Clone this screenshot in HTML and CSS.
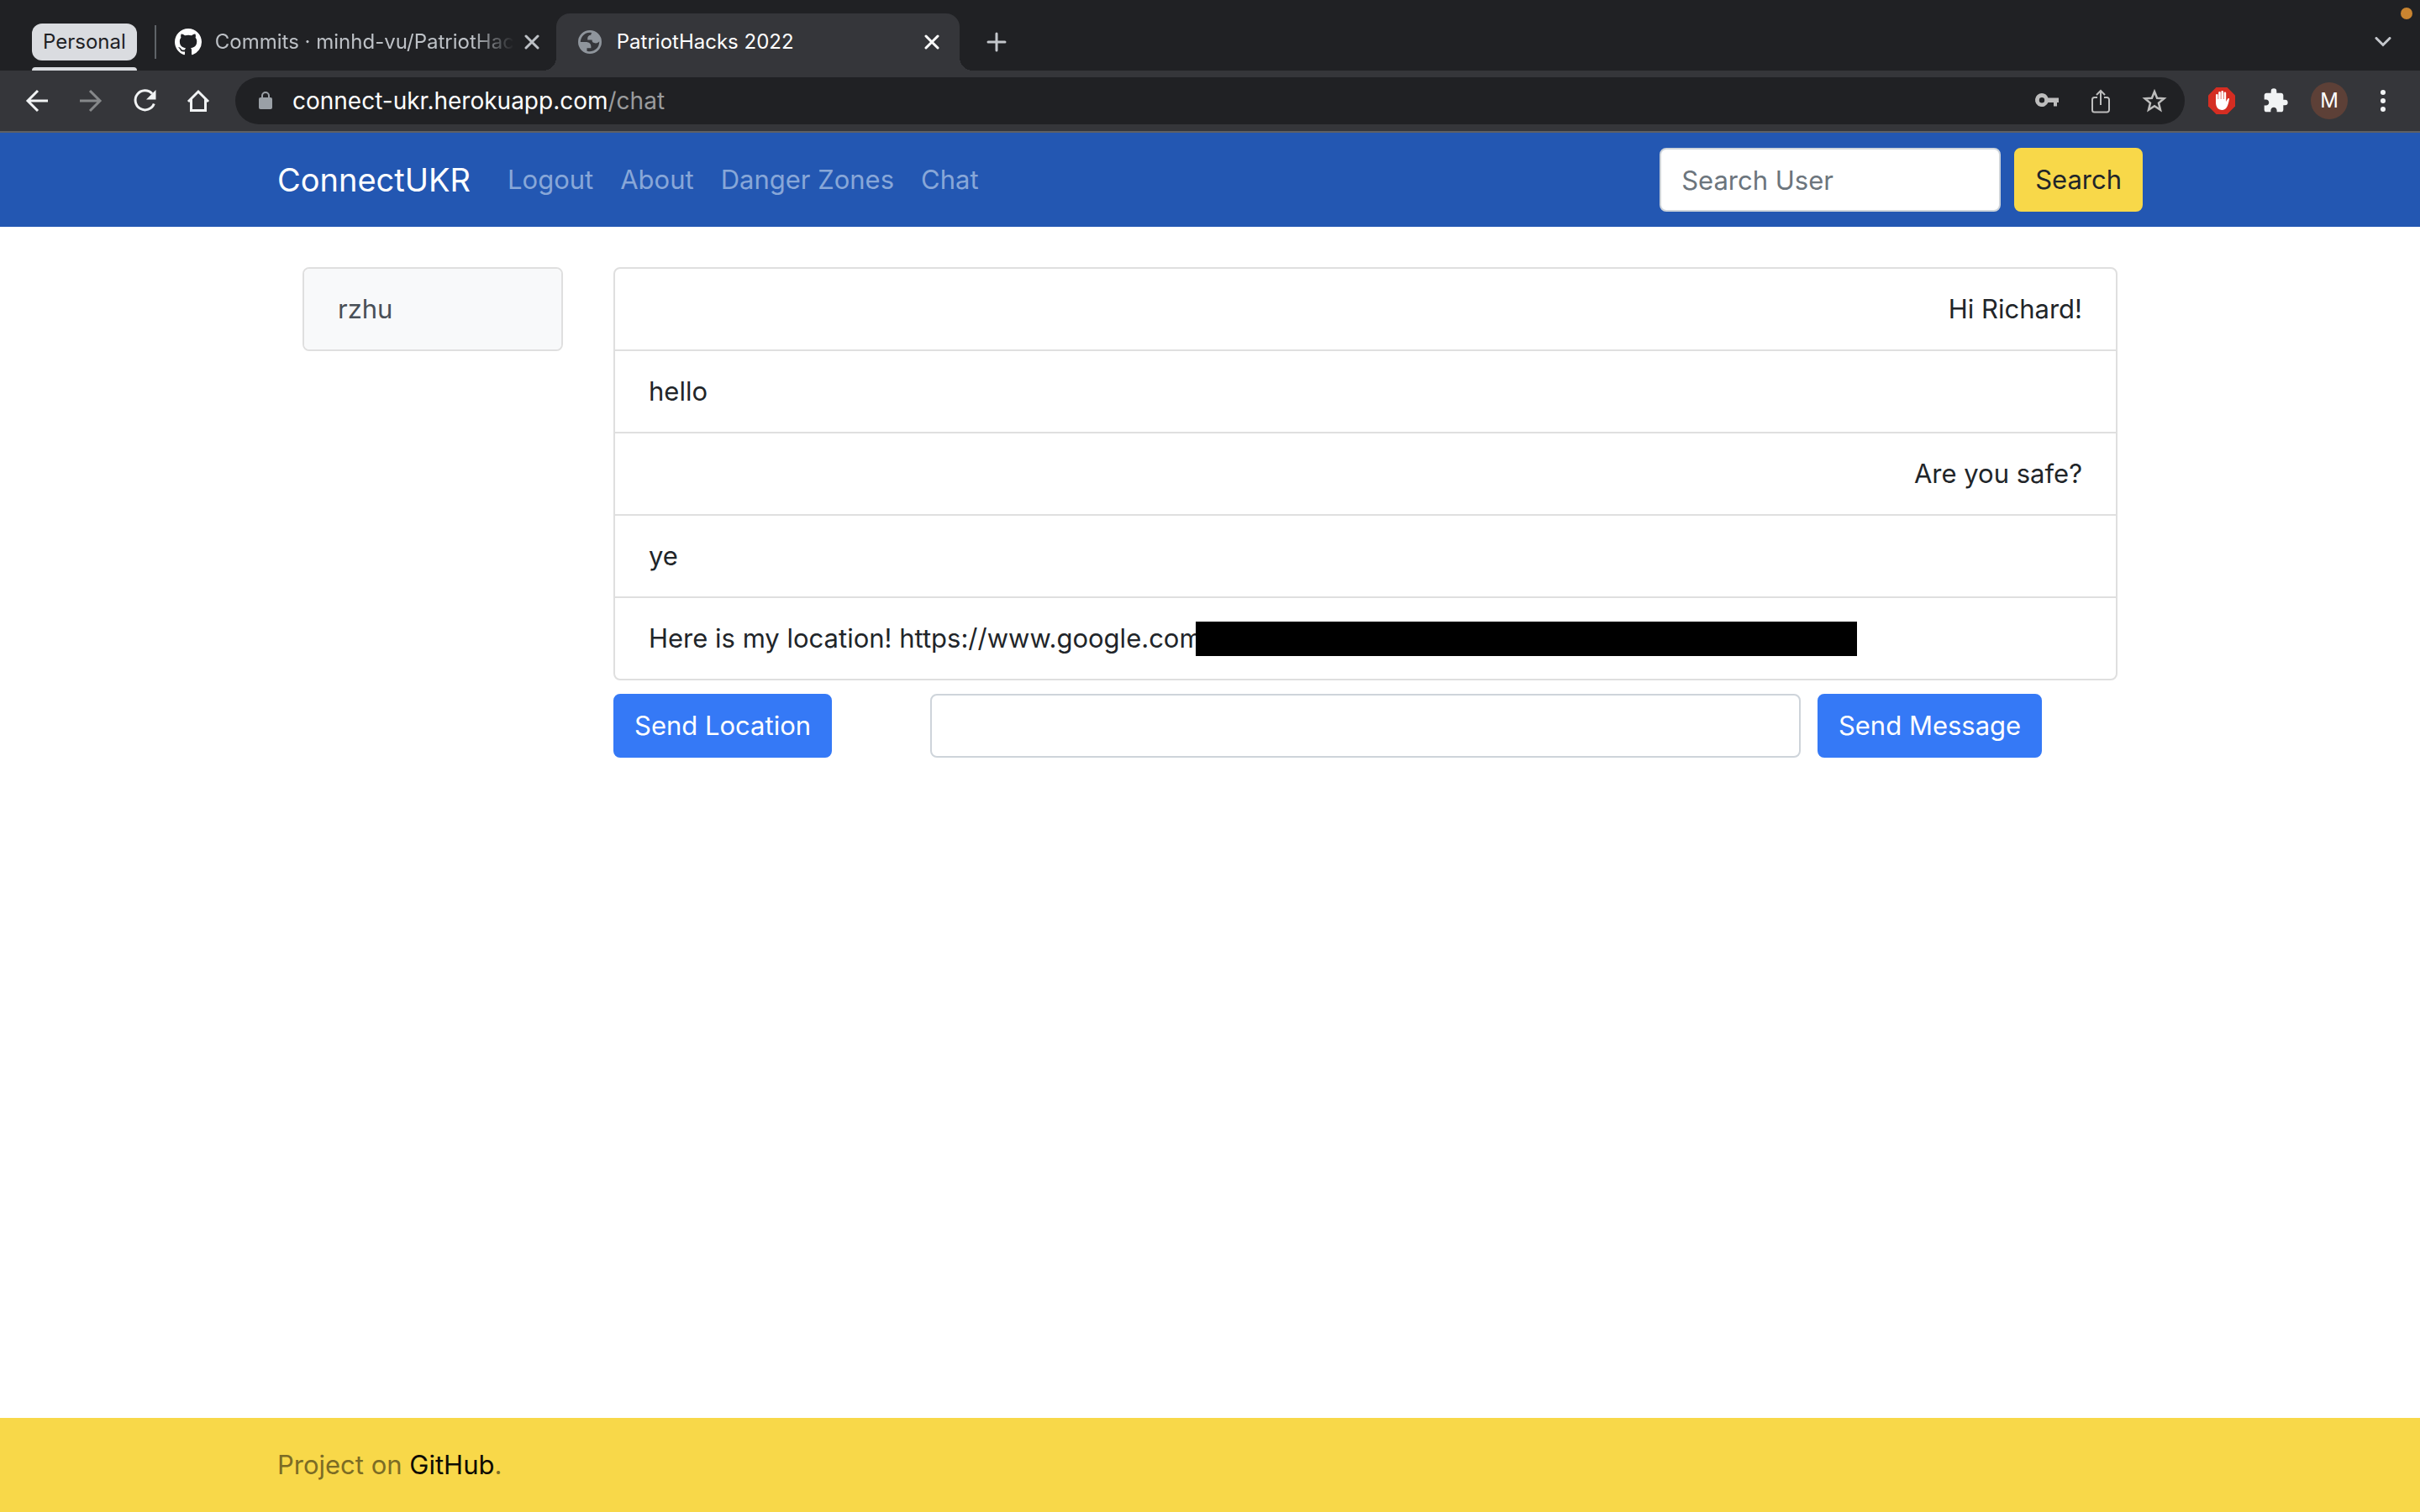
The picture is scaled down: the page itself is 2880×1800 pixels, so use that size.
FILE: index.html
```html
<!DOCTYPE html>
<html lang="en">
<head>
    <meta charset="UTF-8">
    <meta name="viewport" content="width=device-width, initial-scale=1.0">
    <title>PatriotHacks 2022</title>
    <link rel="stylesheet" href="styles.css">
</head>
<body>
    <!-- Browser window -->
    <div class="browser">
        <div class="tab-strip">
            <button class="tab-group" type="button">Personal</button>
            <span class="tab-separator"></span>
            <div class="tab">
                <svg class="tab-icon tab-icon-github" viewBox="0 0 16 16"><path fill="#fff" d="M8 0C3.58 0 0 3.58 0 8c0 3.54 2.29 6.53 5.47 7.59.4.07.55-.17.55-.38 0-.19-.01-.82-.01-1.49-2.01.37-2.53-.49-2.69-.94-.09-.23-.48-.94-.82-1.13-.28-.15-.68-.52-.01-.53.63-.01 1.08.58 1.23.82.72 1.21 1.87.87 2.33.66.07-.52.28-.87.51-1.07-1.78-.2-3.64-.89-3.64-3.95 0-.87.31-1.59.82-2.15-.08-.2-.36-1.02.08-2.12 0 0 .67-.21 2.2.82.64-.18 1.32-.27 2-.27s1.36.09 2 .27c1.53-1.04 2.2-.82 2.2-.82.44 1.1.16 1.92.08 2.12.51.56.82 1.27.82 2.15 0 3.07-1.87 3.75-3.65 3.95.29.25.54.73.54 1.48 0 1.07-.01 1.93-.01 2.2 0 .21.15.46.55.38A8.01 8.01 0 0 0 16 8c0-4.42-3.58-8-8-8z"/></svg>
                <span class="tab-title tab-title-fade">Commits · minhd-vu/PatriotHac</span>
                <button class="tab-close" type="button" aria-label="Close tab">
                    <svg viewBox="0 0 18 18"><path d="M2 2l14 14M16 2L2 16"/></svg>
                </button>
            </div>
            <div class="tab tab-active">
                <svg class="tab-icon tab-icon-globe" viewBox="2 2 20 20"><path fill="#8f959c" fill-rule="evenodd" d="M12 2a10 10 0 1 0 0 20 10 10 0 0 0 0-20zM4 12h4.400c3.407.022 4.922 1.730 4.543 5.127H9.488v2.470a8.004 8.004 0 0 0 10.498-8.083C19.327 12.504 18.332 13 17 13c-2.137 0-3.206-.916-3.206-2.750h-3.748c-.274-2.728.683-4.092 2.870-4.092 0-.975.327-1.597.811-1.970A8.004 8.004 0 0 0 4 12z"/></svg>
                <span class="tab-title">PatriotHacks 2022</span>
                <button class="tab-close" type="button" aria-label="Close tab">
                    <svg viewBox="0 0 18 18"><path d="M2 2l14 14M16 2L2 16"/></svg>
                </button>
            </div>
            <button class="new-tab" type="button" aria-label="New tab">
                <svg viewBox="0 0 24 24"><path d="M12 2v20M2 12h20"/></svg>
            </button>
            <button class="tab-search" type="button" aria-label="Search tabs">
                <svg viewBox="0 0 20 12"><path d="M2 1.500l8 8 8-8"/></svg>
            </button>
            <span class="recording-dot"></span>
        </div>

        <div class="toolbar">
            <div class="toolbar-nav">
                <button type="button" aria-label="Back">
                    <svg viewBox="0 0 32 32"><path fill="none" stroke="#f1f3f4" stroke-width="3" d="M29 16H5M17 4L5 16l12 12"/></svg>
                </button>
                <button type="button" aria-label="Forward">
                    <svg viewBox="0 0 32 32"><path fill="none" stroke="#86888a" stroke-width="3" d="M3 16h24M15 4l12 12-12 12"/></svg>
                </button>
                <button type="button" aria-label="Reload">
                    <svg viewBox="0 0 32 32"><path fill="none" stroke="#f1f3f4" stroke-width="3" d="M25 7.500A11.500 11.500 0 1 0 27.300 19.500"/><path fill="#f1f3f4" d="M29.500 3v11.500H18z"/></svg>
                </button>
                <button type="button" aria-label="Home">
                    <svg viewBox="0 0 32 32"><path fill="none" stroke="#f1f3f4" stroke-width="3" d="M4 17L16 5l12 12M7.500 14v13.500h17V14"/></svg>
                </button>
            </div>
            <div class="address-bar">
                <svg class="lock" viewBox="0 0 16 22"><rect y="7" width="16" height="14" rx="2" fill="#9aa0a6"/><path fill="none" stroke="#9aa0a6" stroke-width="2" d="M4 8V5a4 4 0 0 1 8 0v3"/></svg>
                <span class="url">connect-ukr.herokuapp.com<span class="url-path">/chat</span></span>
                <button type="button" aria-label="Passwords">
                    <svg viewBox="0 0 32 32"><path fill="#bdbdbd" fill-rule="evenodd" d="M10 7a8 8 0 1 0 7.400 11H24v4.500h4V18h2v-5.500H17.400A8 8 0 0 0 10 7zm0 5a3.200 3.200 0 1 1 0 6.400 3.200 3.200 0 0 1 0-6.400z"/></svg>
                </button>
                <button type="button" aria-label="Share">
                    <svg viewBox="0 0 32 32"><path fill="none" stroke="#bdbdbd" stroke-width="2" d="M12 12H8.500a2.500 2.500 0 0 0-2.500 2.500V27a2.500 2.500 0 0 0 2.500 2.500h15A2.500 2.500 0 0 0 26 27V14.500a2.500 2.500 0 0 0-2.500-2.500H20M16 21V4M11 9l5-5 5 5"/></svg>
                </button>
                <button type="button" aria-label="Bookmark">
                    <svg viewBox="0 0 32 32"><path fill="none" stroke="#bdbdbd" stroke-width="2.500" d="M16 5l3.100 7.700 8.300.6-6.400 5.300 2 8.100-7-4.400-7 4.400 2-8.100-6.400-5.300 8.300-.6z"/></svg>
                </button>
            </div>
            <div class="toolbar-extras">
                <button type="button" aria-label="Ad blocker">
                    <svg viewBox="0 0 32 32"><path fill="#d52d22" d="M9.500 0h13L32 9.500v13L22.500 32h-13L0 22.500v-13z"/><path fill="#fff" d="M9 18V9.300a1.300 1.300 0 0 1 2.600 0V14h.6V6.300a1.300 1.300 0 0 1 2.600 0V14h.6V5.300a1.300 1.300 0 0 1 2.600 0V14h.6V6.800a1.300 1.300 0 0 1 2.600 0V17l1.800-3.300c.5-.9 1.700-.8 2.100-.2-.8 4.500-2.300 13.500-8.300 13.500C11.500 27 9 23 9 18z"/></svg>
                </button>
                <button type="button" aria-label="Extensions">
                    <svg viewBox="0 0 24 24"><path fill="#f1f3f4" d="M20.500 11H19V7c0-1.100-.9-2-2-2h-4V3.500a2.500 2.500 0 0 0-5 0V5H4c-1.100 0-1.990.9-1.990 2v3.800H3.500c1.490 0 2.700 1.210 2.700 2.700s-1.210 2.700-2.700 2.700H2V20c0 1.100.9 2 2 2h3.800v-1.500c0-1.490 1.210-2.700 2.700-2.700s2.700 1.210 2.700 2.700V22H17c1.100 0 2-.9 2-2v-4h1.500a2.500 2.500 0 0 0 0-5z"/></svg>
                </button>
                <button class="profile" type="button">M</button>
                <button type="button" aria-label="Menu">
                    <svg viewBox="0 0 32 32" fill="#f1f3f4"><circle cx="16" cy="6" r="3"/><circle cx="16" cy="16" r="3"/><circle cx="16" cy="26" r="3"/></svg>
                </button>
            </div>
        </div>
    </div>

    <nav class="navbar">
        <div class="container navbar-inner">
            <a class="navbar-brand" href="#">ConnectUKR</a>
            <div class="navbar-nav">
                <a href="#">Logout</a>
                <a href="#">About</a>
                <a href="#">Danger Zones</a>
                <a href="#">Chat</a>
            </div>
            <form class="search-form">
                <input class="form-control" type="search" placeholder="Search User" aria-label="Search User">
                <button class="btn btn-warning" type="submit">Search</button>
            </form>
        </div>
    </nav>

    <main class="container chat">
        <div class="chat-users">
            <div class="list-group">
                <a class="list-item list-item-user" href="#">rzhu</a>
            </div>
        </div>
        <div class="chat-main">
            <ul class="list-group">
                <li class="list-item list-item-sent">Hi Richard!</li>
                <li class="list-item">hello</li>
                <li class="list-item list-item-sent">Are you safe?</li>
                <li class="list-item">ye</li>
                <li class="list-item">Here is my location! https://www.google.com<span class="redacted"></span></li>
            </ul>
            <form class="message-form">
                <div class="form-col">
                    <button class="btn btn-primary" type="button">Send Location</button>
                </div>
                <div class="form-col">
                    <input class="form-control" type="text" aria-label="Message">
                </div>
                <div class="form-col">
                    <button class="btn btn-primary" type="submit">Send Message</button>
                </div>
            </form>
        </div>
    </main>

    <footer class="footer">
        <div class="container">Project on <a href="#">GitHub</a>.</div>
    </footer>
</body>
</html>
```
FILE: styles.css
```css
* {
    box-sizing: border-box;
}
body {
    margin: 0;
    min-height: 100vh;
    display: flex;
    flex-direction: column;
    font-family: Inter, "Liberation Sans", sans-serif;
    font-size: 31px;
    line-height: 48px;
    color: #212529;
    background-color: #fff;
}
button, input {
    font: inherit;
}
button {
    margin: 0;
    padding: 0;
    border: none;
    background: none;
    cursor: pointer;
}
a {
    text-decoration: none;
}
svg {
    display: block;
}

/* Browser window */
.browser {
    border-bottom: 2px solid #5f6063;
    font-size: 24px;
    line-height: 32px;
}
.tab-strip {
    position: relative;
    display: flex;
    align-items: center;
    height: 84px;
    padding: 16px 34px 0 38px;
    background-color: #202124;
}
.tab-group {
    position: relative;
    align-self: flex-start;
    height: 44px;
    margin-top: 12px;
    padding: 0 13px;
    border-radius: 12px;
    background-color: #dadce0;
    color: #202124;
}
.tab-group::after {
    content: "";
    position: absolute;
    left: 0;
    right: 0;
    bottom: -12px;
    height: 4px;
    border-radius: 4px 4px 0 0;
    background-color: #dadce0;
}
.tab-separator {
    align-self: flex-start;
    width: 2px;
    height: 40px;
    margin: 14px 22px 0 21px;
    background-color: #5f6368;
}
.tab {
    position: relative;
    display: flex;
    align-items: center;
    width: 454px;
    height: 68px;
    padding: 0 20px 0 0;
    color: #bdc1c6;
}
.tab-active {
    width: 480px;
    padding: 0 24px 0 26px;
    border-radius: 16px 16px 0 0;
    background-color: #35363a;
    color: #fff;
}
.tab-active::before, .tab-active::after {
    content: "";
    position: absolute;
    bottom: 0;
    width: 16px;
    height: 16px;
}
.tab-active::before {
    left: -16px;
    background: radial-gradient(circle at 0 0, #202124 16px, #35363a 16px);
}
.tab-active::after {
    right: -16px;
    background: radial-gradient(circle at 100% 0, #202124 16px, #35363a 16px);
}
.tab-icon {
    flex: none;
}
.tab-icon-github {
    width: 32px;
    height: 32px;
}
.tab-icon-globe {
    width: 28px;
    height: 28px;
}
.tab-title {
    flex: 1;
    margin: 0 12px 0 16px;
    white-space: nowrap;
}
.tab-active .tab-title {
    margin-left: 18px;
}
.tab-title-fade {
    -webkit-mask-image: linear-gradient(to right, #000 86%, transparent);
    mask-image: linear-gradient(to right, #000 86%, transparent);
}
.tab-close svg {
    width: 18px;
    height: 18px;
}
.tab-close, .new-tab, .tab-search {
    color: inherit;
}
.tab-close path, .new-tab path, .tab-search path {
    fill: none;
    stroke: currentColor;
    stroke-width: 3;
    stroke-linecap: round;
}
.new-tab, .tab-search {
    color: #c4c7cc;
}
.new-tab {
    margin-left: 32px;
}
.new-tab svg {
    width: 24px;
    height: 24px;
}
.tab-search {
    margin-left: auto;
}
.tab-search svg {
    width: 20px;
    height: 12px;
}
.recording-dot {
    position: absolute;
    top: 9px;
    right: 9px;
    width: 14px;
    height: 14px;
    border-radius: 50%;
    background-color: #c98430;
}
.toolbar {
    display: flex;
    align-items: center;
    height: 72px;
    padding: 0 28px;
    background-color: #35363a;
}
.toolbar svg {
    width: 32px;
    height: 32px;
}
.toolbar-nav {
    display: flex;
    gap: 32px;
    margin-right: 28px;
}
.address-bar {
    flex: 1;
    display: flex;
    align-items: center;
    gap: 32px;
    height: 56px;
    padding: 0 20px 0 28px;
    border-radius: 28px;
    background-color: #202124;
    font-size: 28px;
}
.toolbar .lock {
    width: 16px;
    height: 22px;
}
.url {
    flex: 1;
    margin-left: -8px;
    color: #fff;
}
.url-path {
    color: #9a9b9d;
}
.toolbar-extras {
    display: flex;
    align-items: center;
    gap: 32px;
    margin-left: 28px;
}
.profile {
    width: 44px;
    height: 44px;
    margin: 0 -6px;
    border-radius: 50%;
    background-color: #5d4037;
    color: #fff;
}

/* Navbar */
.container {
    width: 100%;
    max-width: 2280px;
    margin: 0 auto;
    padding: 0 30px;
}
.navbar {
    padding: 18px 0;
    background-color: #2357b2;
}
.navbar-inner {
    display: flex;
    align-items: center;
}
.navbar-brand {
    margin-right: 44px;
    color: #fff;
    font-size: 38px;
}
.navbar-nav {
    display: flex;
    gap: 32px;
}
.navbar-nav a {
    color: #88a7d8;
}
.search-form {
    display: flex;
    gap: 16px;
    margin-left: auto;
}
.search-form .form-control {
    width: 406px;
}
.form-control {
    display: block;
    width: 100%;
    height: 76px;
    padding: 12px 24px;
    border: 2px solid #ced4da;
    border-radius: 8px;
    background-color: #fff;
    color: #495057;
}
.form-control::placeholder {
    color: #6c757d;
    opacity: 1;
}
.btn {
    padding: 12px 23px;
    border: 2px solid transparent;
    border-radius: 8px;
    white-space: nowrap;
}
.btn-warning {
    border-color: #f8d849;
    background-color: #f8d849;
    color: #212529;
}
.btn-primary {
    border-color: #3579f6;
    background-color: #3579f6;
    color: #fff;
}

/* Chat */
.chat {
    display: grid;
    grid-template-columns: 2fr 10fr;
    margin-top: 48px;
}
.chat-users, .chat-main {
    padding: 0 30px;
    min-width: 0;
}
.list-group {
    margin: 0;
    padding: 0;
    list-style: none;
    border: 2px solid #dfdfdf;
    border-radius: 8px;
    overflow: hidden;
}
.list-item {
    display: flex;
    align-items: center;
    padding: 24px 40px;
}
.list-item + .list-item {
    border-top: 2px solid #dfdfdf;
}
.list-item-user {
    background-color: #f8f9fa;
    color: #495057;
}
.list-item-sent {
    justify-content: flex-end;
}
.redacted {
    width: 787px;
    height: 41px;
    margin-left: -8px;
    background-color: #000;
}
.message-form {
    display: grid;
    grid-template-columns: 5fr 14fr 5fr;
    margin: 16px -10px 0;
}
.form-col {
    padding: 0 10px;
}

/* Footer */
.footer {
    margin-top: auto;
    padding: 32px 0;
    background-color: #f8d849;
    color: #7c6c25;
}
.footer a {
    color: #0d0b04;
}
```
